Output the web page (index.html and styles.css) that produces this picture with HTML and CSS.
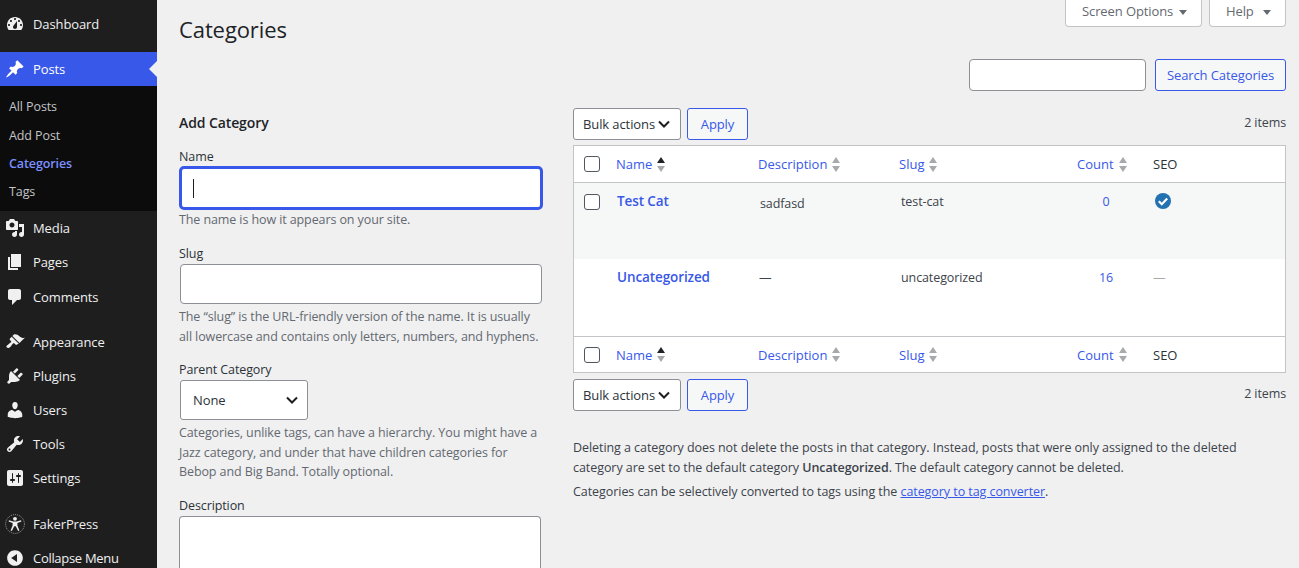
FILE: index.html
```html
<!DOCTYPE html>
<html lang="en">
<head>
    <meta charset="UTF-8">
    <meta name="viewport" content="width=device-width, initial-scale=1.0">
    <title>Categories</title>
    <link rel="stylesheet" href="styles.css">
</head>
<body>
    <nav class="sidebar">
        <ul class="menu first">
            <li><a href="#"><svg class="ico" viewBox="0 0 20 20"><path fill-rule="evenodd" d="M3.76 16h12.48c1.1-1.37 1.76-3.11 1.76-5 0-4.42-3.58-8-8-8s-8 3.58-8 8c0 1.89.66 3.63 1.76 5zM10 4c.55 0 1 .45 1 1s-.45 1-1 1-1-.45-1-1 .45-1 1-1zM6 6c.55 0 1 .45 1 1s-.45 1-1 1-1-.45-1-1 .45-1 1-1zm8 0c.55 0 1 .45 1 1s-.45 1-1 1-1-.45-1-1 .45-1 1-1zm-5.37 5.55L12 7v6c0 1.1-.9 2-2 2s-2-.9-2-2c0-.57.24-1.08.63-1.45zM4 10c.55 0 1 .45 1 1s-.45 1-1 1-1-.45-1-1 .45-1 1-1zm12 0c.55 0 1 .45 1 1s-.45 1-1 1-1-.45-1-1 .45-1 1-1z"/></svg>Dashboard</a></li>
        </ul>
        <ul class="menu">
            <li class="current"><a href="#"><svg class="ico" viewBox="0 0 20 20"><path d="M10.44 3.02l1.82-1.82 6.36 6.35-1.83 1.82c-1.05-.68-2.48-.57-3.41.36l-.75.75c-.92.93-1.04 2.35-.35 3.41l-1.83 1.82-2.41-2.41-2.8 2.79c-.42.42-3.38 2.71-3.8 2.29s1.86-3.39 2.28-3.81l2.79-2.79L4.1 9.36l1.83-1.82c1.05.69 2.48.57 3.4-.36l.75-.75c.93-.92 1.05-2.35.36-3.41z"/></svg>Posts</a></li>
        </ul>
        <ul class="submenu">
            <li><a href="#">All Posts</a></li>
            <li><a href="#">Add Post</a></li>
            <li class="on"><a href="#">Categories</a></li>
            <li><a href="#">Tags</a></li>
        </ul>
        <ul class="menu">
            <li><a href="#"><svg class="ico" viewBox="0 0 20 20"><path d="M13 11V4c0-.55-.45-1-1-1h-1.67L9 1H5L3.67 3H2c-.55 0-1 .45-1 1v7c0 .55.45 1 1 1h10c.55 0 1-.45 1-1zM7 4.5c1.38 0 2.5 1.12 2.5 2.5S8.38 9.5 7 9.5 4.5 8.38 4.5 7 5.62 4.5 7 4.5zM14 6h5v10.5c0 1.38-1.12 2.5-2.5 2.5S14 17.88 14 16.5s1.12-2.5 2.5-2.5c.17 0 .34.02.5.05V9h-3V6zm-4 8.05V13h2v3.5c0 1.38-1.12 2.5-2.5 2.5S7 17.88 7 16.5 8.12 14 9.5 14c.17 0 .34.02.5.05z"/></svg>Media</a></li>
            <li><a href="#"><svg class="ico" viewBox="0 0 20 20"><path d="M6 15V2h10v13H6zm-1 1h8v2H3V5h2v11z"/></svg>Pages</a></li>
            <li class="nudge"><a href="#"><svg class="ico" viewBox="0 0 20 20"><path d="M5 2h9c1.1 0 2 .9 2 2v7c0 1.1-.9 2-2 2h-2l-5 5v-5H5c-1.1 0-2-.9-2-2V4c0-1.1.9-2 2-2z"/></svg>Comments</a></li>
        </ul>
        <ul class="menu gap">
            <li><a href="#"><svg class="ico" viewBox="0 0 20 20"><path d="M14.48 11.06L7.41 3.99l1.5-1.5c.5-.56 2.3-.47 3.51.32 1.21.8 1.43 1.28 2.91 2.1 1.18.64 2.45 1.26 4.45.85zm-.71.71L6.7 4.7 4.93 6.47c-.39.39-.39 1.02 0 1.41l1.06 1.06c.39.39.39 1.03 0 1.42-.6.6-1.43 1.11-2.21 1.69-.35.26-.7.53-1.01.84C1.43 13.23.99 14.65 1.91 15.56c.92.92 2.33.45 3.56-.78.31-.31.58-.66.84-1.01.58-.78 1.09-1.61 1.69-2.21.39-.39 1.03-.39 1.42 0l1.06 1.06c.39.39 1.02.39 1.41 0z"/></svg>Appearance</a></li>
            <li><a href="#"><svg class="ico" viewBox="0 0 20 20"><path d="M13.11 4.36L9.87 7.6 8 5.73l3.24-3.24c.35-.34 1.05-.2 1.56.32.52.51.66 1.21.31 1.55zm-8 1.77l.91-1.12 9.01 9.01-1.19.84c-.71.71-2.63 1.16-3.82 1.16H6.14L4.9 17.26c-.59.59-1.54.59-2.12 0-.59-.58-.59-1.53 0-2.12l1.24-1.24v-3.88c0-1.13.4-3.19 1.09-3.89zm7.26 3.97l3.24-3.24c.34-.35 1.04-.21 1.55.31.52.51.66 1.21.31 1.55l-3.24 3.25z"/></svg>Plugins</a></li>
            <li><a href="#"><svg class="ico" viewBox="0 0 20 20"><path d="M10 9.25c-2.27 0-2.73-3.44-2.73-3.44C7 4.02 7.82 2 9.97 2c2.16 0 2.98 2.02 2.71 3.81 0 0-.41 3.44-2.68 3.44zm0 2.57L12.72 10c2.39 0 4.52 2.33 4.52 4.53v2.49s-3.65 1.13-7.24 1.13c-3.65 0-7.24-1.13-7.24-1.13v-2.49c0-2.25 1.94-4.48 4.47-4.48z"/></svg>Users</a></li>
            <li><a href="#"><svg class="ico" viewBox="0 0 20 20"><path fill-rule="evenodd" d="M16.68 9.77c-1.34 1.34-3.3 1.67-4.95.99l-5.41 6.52c-.99.99-2.59.99-3.58 0s-.99-2.59 0-3.57l6.52-5.42c-.68-1.65-.35-3.61.99-4.95 1.28-1.28 3.12-1.62 4.72-1.06l-2.89 2.89 2.82 2.82 2.86-2.87c.53 1.58.18 3.39-1.08 4.65zM3.81 16.21c.4.39 1.04.39 1.43 0 .4-.4.4-1.04 0-1.43-.39-.4-1.03-.4-1.43 0-.39.39-.39 1.03 0 1.43z"/></svg>Tools</a></li>
            <li><a href="#"><svg class="ico" viewBox="0 0 20 20"><path fill-rule="evenodd" d="M18 16V4c0-1.1-.9-2-2-2H4c-1.1 0-2 .9-2 2v12c0 1.1.9 2 2 2h12c1.1 0 2-.9 2-2zM8 11h1c.55 0 1 .45 1 1s-.45 1-1 1H8v1.5c0 .28-.22.5-.5.5s-.5-.22-.5-.5V13H6c-.55 0-1-.45-1-1s.45-1 1-1h1V5.5c0-.28.22-.5.5-.5s.5.22.5.5V11zm5-2h-1c-.55 0-1-.45-1-1s.45-1 1-1h1V5.5c0-.28.22-.5.5-.5s.5.22.5.5V7h1c.55 0 1 .45 1 1s-.45 1-1 1h-1v5.5c0 .28-.22.5-.5.5s-.5-.22-.5-.5V9z"/></svg>Settings</a></li>
        </ul>
        <ul class="menu gap last">
            <li><a href="#"><svg class="ico faker" viewBox="0 0 20 20"><circle cx="10" cy="10" r="9.4" fill="none" stroke="currentColor" stroke-width=".6" stroke-dasharray="1 1"/><circle cx="10" cy="4.8" r="1.9"/><path d="M3.6 7.4l.4-1.2 4.2 1.3h3.6l4.2-1.3.4 1.2-4 1.6v2.6l2 5-1.3.5-2.3-4.9h-1.6l-2.3 4.9-1.3-.5 2-5V9z"/></svg>FakerPress</a></li>
            <li class="collapse"><a href="#"><svg class="ico" viewBox="0 0 20 20"><path fill-rule="evenodd" d="M10 2.16c4.33 0 7.84 3.51 7.84 7.84s-3.51 7.84-7.84 7.84S2.16 14.33 2.16 10 5.67 2.16 10 2.16zm2 11.72V6.12L6.18 9.97z"/></svg>Collapse Menu</a></li>
        </ul>
    </nav>

    <div class="main">
        <div class="page-head">
            <h1>Categories</h1>
            <div class="screen-tabs">
                <button class="tab tab-screen">Screen Options<i class="tab-arrow"></i></button>
                <button class="tab tab-help">Help<i class="tab-arrow"></i></button>
            </div>
        </div>
        <div class="search-row">
            <input class="search-input" type="text">
            <button class="btn search-btn">Search Categories</button>
        </div>

        <div class="cols">
            <form class="col-left">
                <h2>Add Category</h2>
                <div class="field name-field">
                    <label>Name</label>
                    <div class="input focused"><span class="caret"></span></div>
                    <p class="help">The name is how it appears on your site.</p>
                </div>
                <div class="field slug-field">
                    <label>Slug</label>
                    <div class="input"></div>
                    <p class="help">The “slug” is the URL-friendly version of the name. It is usually all lowercase and contains only letters, numbers, and hyphens.</p>
                </div>
                <div class="field parent-field">
                    <label>Parent Category</label>
                    <div class="select parent">None<svg class="chev" viewBox="0 0 16 16"><path d="M3 5.5l5 5 5-5"/></svg></div>
                    <p class="help">Categories, unlike tags, can have a hierarchy. You might have a Jazz category, and under that have children categories for Bebop and Big Band. Totally optional.</p>
                </div>
                <div class="field desc-field">
                    <label>Description</label>
                    <div class="textarea"></div>
                </div>
            </form>

            <div class="col-right">
                <div class="tablenav">
                    <div class="select bulk">Bulk actions<svg class="chev" viewBox="0 0 16 16"><path d="M3 5.5l5 5 5-5"/></svg></div>
                    <button class="btn apply">Apply</button>
                    <span class="count-items">2 items</span>
                </div>

                <table class="cats">
                    <colgroup>
                        <col class="c-check"><col class="c-name"><col class="c-desc"><col class="c-slug"><col class="c-count"><col class="c-seo">
                    </colgroup>
                    <thead>
                        <tr>
                            <th><span class="check"></span></th>
                            <th><div class="head-cell"><a href="#">Name</a><span class="sort up"><i></i><i></i></span></div></th>
                            <th><div class="head-cell"><a href="#">Description</a><span class="sort"><i></i><i></i></span></div></th>
                            <th><div class="head-cell"><a href="#">Slug</a><span class="sort"><i></i><i></i></span></div></th>
                            <th><div class="head-cell"><a href="#">Count</a><span class="sort"><i></i><i></i></span></div></th>
                            <th>SEO</th>
                        </tr>
                    </thead>
                    <tbody>
                        <tr class="alt">
                            <td><span class="check"></span></td>
                            <td class="title-cell"><a class="row-title" href="#">Test Cat</a></td>
                            <td class="desc-cell">sadfasd</td>
                            <td>test-cat</td>
                            <td class="num"><a href="#">0</a></td>
                            <td class="seo-cell"><svg class="seo-ok" viewBox="0 0 20 20"><circle cx="10" cy="10" r="8"/><path d="M5.8 10.2l3 3 5.4-5.6"/></svg></td>
                        </tr>
                        <tr>
                            <td></td>
                            <td class="title-cell"><a class="row-title" href="#">Uncategorized</a></td>
                            <td class="dash">—</td>
                            <td>uncategorized</td>
                            <td class="num"><a href="#">16</a></td>
                            <td class="muted">—</td>
                        </tr>
                    </tbody>
                    <tfoot>
                        <tr>
                            <th><span class="check"></span></th>
                            <th><div class="head-cell"><a href="#">Name</a><span class="sort up"><i></i><i></i></span></div></th>
                            <th><div class="head-cell"><a href="#">Description</a><span class="sort"><i></i><i></i></span></div></th>
                            <th><div class="head-cell"><a href="#">Slug</a><span class="sort"><i></i><i></i></span></div></th>
                            <th><div class="head-cell"><a href="#">Count</a><span class="sort"><i></i><i></i></span></div></th>
                            <th>SEO</th>
                        </tr>
                    </tfoot>
                </table>

                <div class="tablenav lower">
                    <div class="select bulk">Bulk actions<svg class="chev" viewBox="0 0 16 16"><path d="M3 5.5l5 5 5-5"/></svg></div>
                    <button class="btn apply">Apply</button>
                    <span class="count-items">2 items</span>
                </div>

                <div class="notes">
                    <p class="delete-note">Deleting a category does not delete the posts in that category. Instead, posts that were only assigned to the deleted category are set to the default category <strong>Uncategorized</strong>. The default category cannot be deleted.</p>
                    <p class="convert">Categories can be selectively converted to tags using the <a href="#">category to tag converter</a>.</p>
                </div>
            </div>
        </div>
    </div>
</body>
</html>
```

FILE: styles.css
```css
* {
    box-sizing: border-box;
}

html {
    height: 568px;
    overflow: hidden;
}

body {
    margin: 0;
    display: flex;
    height: 568px;
    overflow: hidden;
    background-color: #f0f0f1;
    color: #3c434a;
    font-family: 'Open Sans', 'Noto Sans', sans-serif;
    font-size: 12.5px;
    letter-spacing: -0.1px;
}

a {
    text-decoration: none;
}

ul {
    list-style: none;
    margin: 0;
    padding: 0;
}

button {
    font-family: inherit;
    letter-spacing: inherit;
}

/* sidebar */
.sidebar {
    width: 157px;
    flex: none;
    background-color: #1e1e1e;
    padding-top: 7px;
    overflow: hidden;
}

.menu a {
    display: flex;
    align-items: center;
    height: 34px;
    color: #f0f0f1;
    font-size: 13px;
}

.ico {
    width: 20px;
    height: 20px;
    margin: 0 8px 0 5px;
    fill: currentColor;
    flex: none;
}

.menu.first {
    margin-bottom: 11px;
}

.menu.gap {
    margin-top: 11px;
}

.menu.last {
    margin-top: 12px;
}

.menu .nudge {
    margin-top: 1px;
}

.menu .collapse {
    height: 27px;
    overflow: hidden;
    letter-spacing: -0.3px;
}

.menu .current a {
    position: relative;
    background-color: #3858e9;
    color: #fff;
}

.menu .current a::after {
    content: "";
    position: absolute;
    right: 0;
    top: 9px;
    border: 8px solid transparent;
    border-right-color: #f0f0f1;
    border-left-width: 0;
}

.submenu {
    background-color: #0c0c0c;
    height: 125px;
    padding-top: 7.4px;
}

.submenu a {
    display: block;
    padding-left: 9px;
    height: 28.3px;
    line-height: 27px;
    color: #c3c4c7;
    font-size: 12.5px;
}

.submenu .on a {
    color: #7b90ff;
    font-weight: 600;
}

/* main area */
.main {
    flex: 1;
    min-width: 0;
    height: 568px;
    overflow: hidden;
    padding: 0 13px 0 22px;
}

.page-head {
    display: flex;
    justify-content: space-between;
    align-items: flex-start;
}

.screen-tabs {
    display: flex;
    gap: 7px;
    margin-top: -1px;
}

.tab {
    display: flex;
    align-items: center;
    justify-content: space-between;
    height: 28px;
    padding: 0 14px 3px 16px;
    background-color: #fff;
    border: 1px solid #c3c4c7;
    border-top: none;
    border-radius: 0 0 4px 4px;
    color: #646970;
    font-size: 13px;
}

.tab-screen {
    width: 137px;
}

.tab-help {
    width: 77px;
}

.tab-arrow {
    margin: 2px 0 0 0;
    border: 4px solid transparent;
    border-top: 5px solid #646970;
    border-bottom-width: 0;
}

h1 {
    margin: 0;
    padding-top: 14px;
    color: #1d2327;
    font-size: 22px;
    font-weight: 400;
    line-height: 30px;
}

.search-row {
    display: flex;
    justify-content: flex-end;
    gap: 9px;
    margin-top: 15px;
}

.search-input {
    width: 177px;
    height: 32px;
    background-color: #fff;
    border: 1px solid #8c8f94;
    border-radius: 4px;
}

.btn {
    height: 32px;
    padding: 0 12px;
    background-color: #f6f7f7;
    border: 1px solid #3858e9;
    border-radius: 3px;
    color: #3858e9;
    font-size: 13px;
    white-space: nowrap;
}

.search-btn {
    width: 131px;
    padding: 0;
}

.cols {
    display: flex;
    gap: 30px;
    margin-top: 17px;
}

/* form */
.col-left {
    width: 364px;
    flex: none;
}

h2 {
    margin: 0;
    padding-top: 6px;
    color: #1d2327;
    font-size: 14px;
    font-weight: 600;
    line-height: 18px;
}

.field label {
    display: block;
    height: 19px;
    line-height: 18px;
    color: #2c3338;
}

.input {
    width: 362px;
    height: 40px;
    margin-left: 1px;
    background-color: #fff;
    border: 1px solid #8c8f94;
    border-radius: 4px;
}

.input.focused {
    position: relative;
    width: 364px;
    height: 44px;
    margin: -1px 0 -2px;
    border: 3px solid #3858e9;
    border-radius: 5px;
}

.caret {
    position: absolute;
    left: 11px;
    top: 10px;
    width: 1px;
    height: 19px;
    background-color: #1e1e1e;
}

.help {
    margin: 0;
    margin-top: 2px;
    color: #646970;
    line-height: 20px;
    font-size: 12.5px;
}

.name-field {
    margin-top: 16px;
}

.slug-field {
    margin-top: 15px;
}

.slug-field .help {
    margin-top: 3px;
}

.parent-field {
    margin-top: 14px;
}

.parent-field .help {
    margin-top: 3px;
    line-height: 19.7px;
}

.desc-field {
    margin-top: 14.6px;
}

.select {
    display: flex;
    align-items: center;
    background-color: #fff;
    border: 1px solid #8c8f94;
    border-radius: 3px;
    color: #2c3338;
}

.parent {
    width: 128px;
    height: 40px;
    margin-left: 1px;
    padding: 0 7px 0 12px;
    justify-content: space-between;
    font-size: 13px;
}

.chev {
    width: 16px;
    height: 16px;
    fill: none;
    stroke: #1e1e1e;
    stroke-width: 2;
    flex: none;
}

.textarea {
    width: 362px;
    height: 52px;
    background-color: #fff;
    border: 1px solid #8c8f94;
    border-bottom: none;
    border-radius: 4px 4px 0 0;
}

/* table side */
.col-right {
    flex: 1;
    min-width: 0;
}

.tablenav {
    display: flex;
    align-items: center;
    gap: 6px;
    height: 32px;
}

.tablenav.lower {
    margin-top: 6px;
}

.bulk {
    width: 108px;
    height: 32px;
    padding-left: 9px;
    font-size: 13px;
    white-space: nowrap;
}

.bulk .chev {
    margin-left: 1px;
}

.apply {
    width: 61px;
    padding: 0;
}

.count-items {
    margin-left: auto;
    margin-top: -4px;
}

.lower .count-items {
    margin-top: -3px;
}

.cats {
    width: 100%;
    margin-top: 5px;
    border: 1px solid #c3c4c7;
    border-collapse: separate;
    border-spacing: 0;
    table-layout: fixed;
    background-color: #fff;
}

.c-check { width: 34px; }
.c-name { width: 142px; }
.c-desc { width: 141px; }
.c-slug { width: 178px; }
.c-count { width: 76px; }

.cats thead th, .cats tfoot th {
    height: 37px;
    padding: 0 0 0 8px;
    color: #2c3338;
    font-size: 13px;
    font-weight: 400;
    letter-spacing: 0;
    text-align: left;
}

.cats thead th {
    border-bottom: 1px solid #c3c4c7;
}

.cats tfoot th {
    height: 36px;
    border-top: 1px solid #c3c4c7;
}

.cats th a {
    color: #3858e9;
}

.cats th:first-child {
    padding-left: 10px;
}

.head-cell {
    display: flex;
    align-items: center;
    gap: 5px;
}

.check {
    display: block;
    width: 16px;
    height: 16px;
    background-color: #fff;
    border: 1px solid #50575e;
    border-radius: 3px;
}

.cats td {
    height: 77px;
    padding: 9px 8px 0 10px;
    vertical-align: top;
    line-height: 20px;
    font-size: 12.5px;
}

.cats tr.alt td {
    height: 76px;
    background-color: #f6f7f7;
}

.cats td:first-child {
    padding: 11px 0 0 10px;
}

.cats td.title-cell {
    padding: 8px 8px 0 9px;
}

.row-title {
    color: #3858e9;
    font-size: 13.5px;
    font-weight: 600;
}

.cats td.desc-cell {
    padding-top: 11px;
}

.cats td.num {
    padding: 9px 2px 0 0;
    text-align: center;
}

.num a {
    color: #3858e9;
}

.cats td.dash {
    padding-left: 9px;
}

.cats td.muted {
    padding-left: 8px;
    color: #a7aaad;
}

.cats td.seo-cell {
    padding: 8px 0 0 8px;
}

.seo-ok {
    display: block;
    width: 20px;
    height: 20px;
}

.seo-ok circle {
    fill: #2271b1;
}

.seo-ok path {
    fill: none;
    stroke: #fff;
    stroke-width: 2.2;
}

.sort {
    display: flex;
    flex-direction: column;
    gap: 3px;
}

.sort i {
    width: 0;
    height: 0;
    border: 4.5px solid transparent;
    border-top-width: 0;
    border-bottom: 6px solid #a7aaad;
}

.sort i + i {
    border-bottom-width: 0;
    border-top: 6px solid #a7aaad;
}

.sort.up i:first-child {
    border-bottom-color: #1d2327;
}

.notes {
    margin-top: 27px;
    line-height: 20px;
    letter-spacing: -0.06px;
}

.notes p {
    margin: 0;
}

.notes .delete-note {
    max-width: 690px;
}

.notes .convert {
    margin-top: 4px;
}

.notes strong {
    font-weight: 600;
}

.notes a {
    color: #3858e9;
    text-decoration: underline;
}
```
